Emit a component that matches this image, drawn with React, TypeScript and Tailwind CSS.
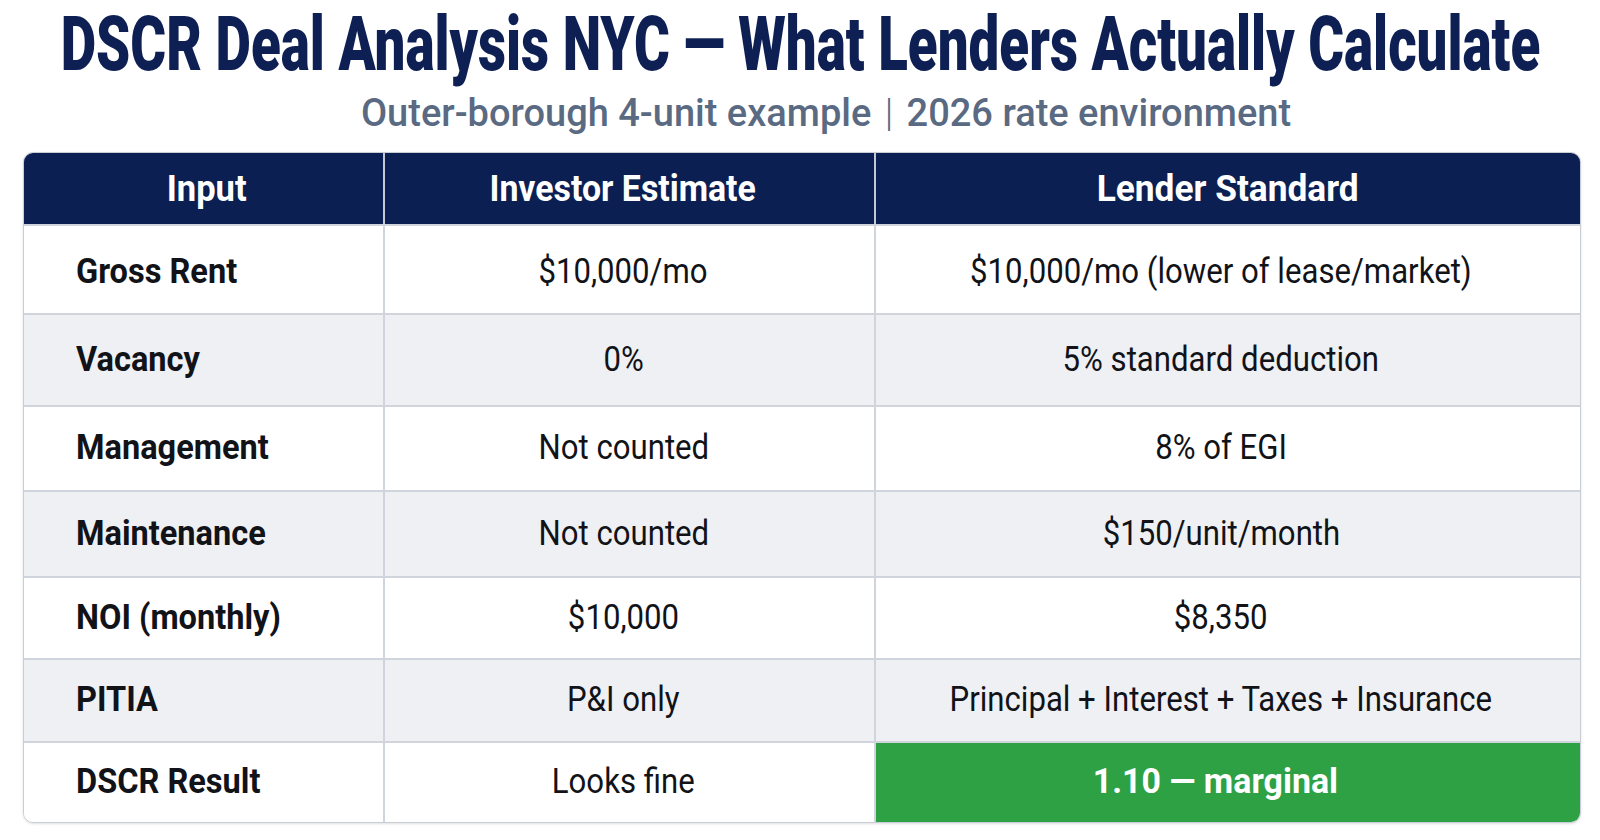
import React from "react";

type Row = {
  label: string;
  inv: string;
  lender: string;
  h: string;
  pad: string;
  bg: string;
  green?: boolean;
};

const rows: Row[] = [
  { label: "Gross Rent", inv: "$10,000/mo", lender: "$10,000/mo (lower of lease/market)", h: "h-[89px]", pad: "pt-[6px]", bg: "bg-white" },
  { label: "Vacancy", inv: "0%", lender: "5% standard deduction", h: "h-[92px]", pad: "", bg: "bg-[#eef0f3]" },
  { label: "Management", inv: "Not counted", lender: "8% of EGI", h: "h-[85px]", pad: "", bg: "bg-white" },
  { label: "Maintenance", inv: "Not counted", lender: "$150/unit/month", h: "h-[86px]", pad: "", bg: "bg-[#eef0f3]" },
  { label: "NOI (monthly)", inv: "$10,000", lender: "$8,350", h: "h-[82px]", pad: "", bg: "bg-white" },
  { label: "PITIA", inv: "P&I only", lender: "Principal + Interest + Taxes + Insurance", h: "h-[83px]", pad: "", bg: "bg-[#eef0f3]" },
  { label: "DSCR Result", inv: "Looks fine", lender: "1.10 — marginal", h: "h-[81px]", pad: "", bg: "bg-white", green: true },
];

const font = { fontFamily: "Roboto, 'Liberation Sans', Arial, sans-serif" };

export default function App() {
  return (
    <div className="w-[1600px] h-[840px] bg-white overflow-hidden flex flex-col" style={font}>
      <div className="pt-[6px] h-[82px] flex justify-center">
        <span className="inline-block whitespace-nowrap text-[76px] leading-[76px] font-black text-[#0e2053] scale-x-[0.72] origin-center">
          DSCR Deal Analysis NYC — What Lenders Actually Calculate
        </span>
      </div>
      <div className="mt-[12px] h-[38px] flex justify-center pl-[52px]">
        <span className="inline-block whitespace-nowrap text-[38px] leading-[38px] font-medium text-[#5a6a82]">
          Outer-borough 4-unit example <span className="font-light px-[4px]">|</span> 2026 rate environment
        </span>
      </div>

      <div className="mt-[20px] ml-[23px] w-[1558px] rounded-[10px] border border-[#c9cdd6] overflow-hidden shadow-sm">
        <div className="grid grid-cols-[359px_491px_1fr] h-[71px] bg-[#0c1f52] text-white">
          <div className="flex items-center justify-center pl-[6px]">
            <span className="inline-block whitespace-nowrap text-[36px] font-bold scale-x-[0.96]">Input</span>
          </div>
          <div className="flex items-center justify-center border-l-2 border-[#c3c8d4] pr-[14px]">
            <span className="inline-block whitespace-nowrap text-[36px] font-bold scale-x-[0.94]">Investor Estimate</span>
          </div>
          <div className="flex items-center justify-center border-l-2 border-[#c3c8d4]">
            <span className="inline-block whitespace-nowrap text-[36px] font-bold scale-x-[0.98]">Lender Standard</span>
          </div>
        </div>

        {rows.map((r) => (
          <div
            key={r.label}
            className={`grid grid-cols-[359px_491px_1fr] border-t-2 border-[#d0d4dc] ${r.h} ${r.bg}`}
          >
            <div className={`flex items-center pl-[52px] text-[#111318] ${r.pad}`}>
              <span className="inline-block whitespace-nowrap text-[35px] font-bold origin-left scale-x-[0.93]">
                {r.label}
              </span>
            </div>
            <div className={`flex items-center justify-center border-l-2 border-[#d0d4dc] pr-[12px] text-[#111318] ${r.pad}`}>
              <span className="inline-block whitespace-nowrap text-[35px] font-normal scale-x-[0.89]">{r.inv}</span>
            </div>
            {r.green ? (
              <div className="flex items-center justify-center border-l-2 border-[#d0d4dc] bg-[#2da144] pr-[26px] text-white">
                <span className="inline-block whitespace-nowrap text-[35px] font-bold scale-x-[0.97]">{r.lender}</span>
              </div>
            ) : (
              <div className={`flex items-center justify-center border-l-2 border-[#d0d4dc] pr-[14px] text-[#111318] ${r.pad}`}>
                <span className="inline-block whitespace-nowrap text-[35px] font-normal scale-x-[0.89]">{r.lender}</span>
              </div>
            )}
          </div>
        ))}
      </div>
    </div>
  );
}
